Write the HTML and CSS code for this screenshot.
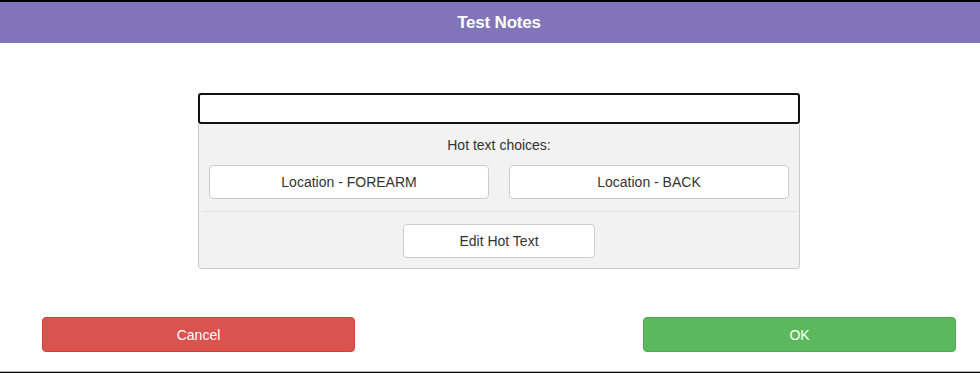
FILE: index.html
```html
<!DOCTYPE html>
<html>
<head>
<meta charset="utf-8">
<title>Test Notes</title>
<link rel="stylesheet" href="styles.css">
</head>
<body>
<div class="modal">
  <div class="modal-header">
    <h1 class="modal-title">Test Notes</h1>
  </div>
  <div class="modal-body">
    <div class="notes">
      <input class="notes-input" type="text">
      <div class="hot-panel">
        <div class="hot-label">Hot text choices:</div>
        <div class="hot-choices">
          <button class="btn btn-default">Location - FOREARM</button>
          <button class="btn btn-default">Location - BACK</button>
        </div>
        <div class="hot-divider"></div>
        <div class="hot-edit">
          <button class="btn btn-default btn-edit">Edit Hot Text</button>
        </div>
      </div>
    </div>
  </div>
  <div class="modal-footer">
    <button class="btn btn-danger btn-wide">Cancel</button>
    <button class="btn btn-success btn-wide">OK</button>
  </div>
</div>
</body>
</html>
```

FILE: styles.css
```css
html, body {
  margin: 0;
  padding: 0;
}
body {
  height: 373px;
  box-sizing: border-box;
  border-top: 2px solid #000;
  border-bottom: 1px solid #000;
  background: #fff;
  font-family: "Liberation Sans", Arial, sans-serif;
  overflow: hidden;
}
.modal {
  height: 370px;
  box-sizing: border-box;
  border-bottom: 1px solid #b5b5b5;
  display: flex;
  flex-direction: column;
}
.modal-header {
  height: 41px;
  background: #8174b8;
  padding-left: 18px;
  display: flex;
  align-items: center;
  justify-content: center;
}
.modal-title {
  margin: 0;
  color: #fff;
  font-size: 17px;
  font-weight: bold;
  letter-spacing: -0.2px;
}
.modal-body {
  padding: 50px 0 0 18px;
  display: flex;
  justify-content: center;
}
.notes {
  width: 602px;
  display: flex;
  flex-direction: column;
}
.notes-input {
  display: block;
  box-sizing: border-box;
  width: 100%;
  height: 31px;
  margin: 0;
  border: 2px solid #111;
  border-radius: 3px;
  background: #fff;
  outline: none;
}
.hot-panel {
  box-sizing: border-box;
  background: #f2f2f2;
  border: 1px solid #ccc;
  border-top: none;
  border-radius: 0 0 4px 4px;
  padding: 0 10px 10px;
  height: 145px;
}
.hot-label {
  text-align: center;
  font-size: 14px;
  color: #333;
  line-height: 16px;
  padding: 13px 0 12px;
}
.hot-choices {
  display: flex;
  gap: 20px;
}
.hot-choices .btn {
  flex: 1;
}
.hot-divider {
  height: 1px;
  background: #e3e3e3;
  margin: 12px -8px 12px;
}
.hot-edit {
  display: flex;
  justify-content: center;
}
.btn {
  box-sizing: border-box;
  height: 34px;
  margin: 0;
  font-family: "Liberation Sans", Arial, sans-serif;
  font-size: 14px;
  border-radius: 4px;
  border: 1px solid #ccc;
  cursor: pointer;
  padding: 0 12px;
}
.btn-default {
  background: #fff;
  color: #333;
}
.btn-edit {
  width: 192px;
}
.modal-footer {
  margin-top: 48px;
  padding: 0 24px 0 42px;
  display: flex;
  justify-content: space-between;
}
.btn-wide {
  width: 313px;
  height: 35px;
  font-size: 14px;
}
.btn-danger {
  background: #d9534f;
  border-color: #d43f3a;
  color: #fff;
}
.btn-success {
  background: #5cb85c;
  border-color: #4cae4c;
  color: #fff;
}
```
